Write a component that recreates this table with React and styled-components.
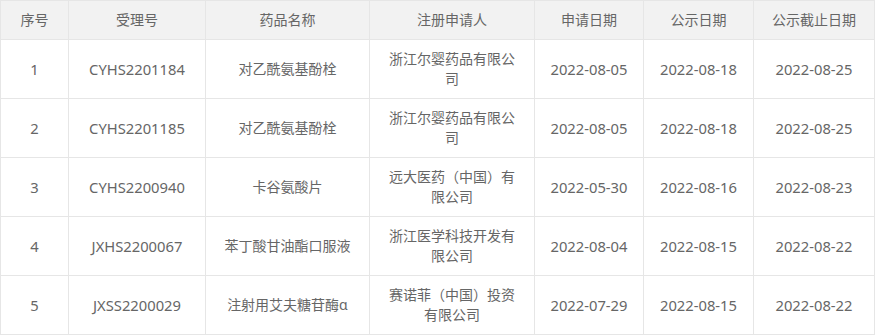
import React from "react";
import styled, { createGlobalStyle } from "styled-components";

const Global = createGlobalStyle`
  html, body { margin: 0; padding: 0; background: #fff; }
  body { font-family: "Noto Sans", "Noto Sans CJK SC", sans-serif; }
`;

const Table = styled.table`
  width: 874px;
  table-layout: fixed;
  border-collapse: collapse;
  border-spacing: 0;
  color: #666;
  font-size: 14px;
  background: #fff;
`;

const HeadCell = styled.th`
  background: #f2f2f2;
  border: 1px solid #e6e6e6;
  padding: 9px 15px;
  line-height: 20px;
  font-weight: 400;
  text-align: center;
  white-space: nowrap;
`;

const Cell = styled.td`
  border: 1px solid #e6e6e6;
  padding: 9px 15px;
  line-height: 20px;
  height: 40px;
  text-align: center;
  word-break: break-all;
  box-sizing: content-box;
  font-size: ${(p) => (p.$latin ? "14.75px" : "14px")};
`;

const columns = [
  { key: "no", title: "序号", width: 68, latin: true },
  { key: "code", title: "受理号", width: 137, latin: true },
  { key: "name", title: "药品名称", width: 164 },
  { key: "applicant", title: "注册申请人", width: 165 },
  { key: "applyDate", title: "申请日期", width: 109, latin: true },
  { key: "pubDate", title: "公示日期", width: 110, latin: true },
  { key: "endDate", title: "公示截止日期", width: 121, latin: true },
];

const rows = [
  { no: "1", code: "CYHS2201184", name: "对乙酰氨基酚栓", applicant: "浙江尔婴药品有限公司", applyDate: "2022-08-05", pubDate: "2022-08-18", endDate: "2022-08-25" },
  { no: "2", code: "CYHS2201185", name: "对乙酰氨基酚栓", applicant: "浙江尔婴药品有限公司", applyDate: "2022-08-05", pubDate: "2022-08-18", endDate: "2022-08-25" },
  { no: "3", code: "CYHS2200940", name: "卡谷氨酸片", applicant: "远大医药（中国）有限公司", applyDate: "2022-05-30", pubDate: "2022-08-16", endDate: "2022-08-23" },
  { no: "4", code: "JXHS2200067", name: "苯丁酸甘油酯口服液", applicant: "浙江医学科技开发有限公司", applyDate: "2022-08-04", pubDate: "2022-08-15", endDate: "2022-08-22" },
  { no: "5", code: "JXSS2200029", name: "注射用艾夫糖苷酶α", applicant: "赛诺菲（中国）投资有限公司", applyDate: "2022-07-29", pubDate: "2022-08-15", endDate: "2022-08-22" },
];

export default function App() {
  return (
    <>
      <Global />
      <Table>
        <colgroup>
          {columns.map((c) => (
            <col key={c.key} style={{ width: c.width }} />
          ))}
        </colgroup>
        <thead>
          <tr>
            {columns.map((c) => (
              <HeadCell key={c.key}>{c.title}</HeadCell>
            ))}
          </tr>
        </thead>
        <tbody>
          {rows.map((r) => (
            <tr key={r.no}>
              {columns.map((c) => (
                <Cell key={c.key} $latin={c.latin}>
                  {r[c.key]}
                </Cell>
              ))}
            </tr>
          ))}
        </tbody>
      </Table>
    </>
  );
}
